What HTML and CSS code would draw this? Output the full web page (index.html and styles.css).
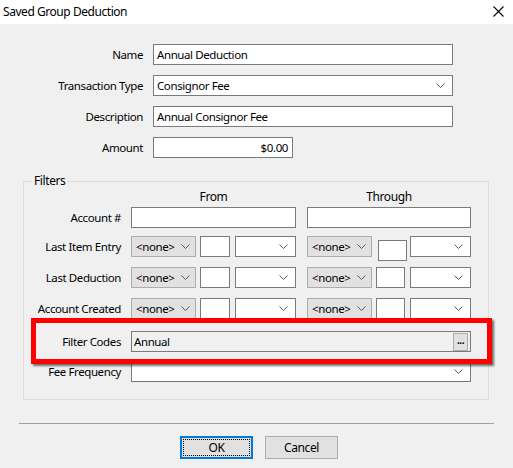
FILE: index.html
```html
<!DOCTYPE html>
<html lang="en">
<head>
<meta charset="utf-8">
<title>Saved Group Deduction</title>
<link rel="stylesheet" href="styles.css">
</head>
<body>
<div class="window">
  <header class="titlebar">
    <span class="title">Saved Group Deduction</span>
    <span class="close" aria-label="Close">
      <svg width="11" height="11" viewBox="0 0 11 11"><path d="M0.5 0.5 L10.5 10.5 M10.5 0.5 L0.5 10.5" stroke="#000" stroke-width="1.1" fill="none"/></svg>
    </span>
  </header>

  <main class="content">
    <div class="main-form">
      <label class="lbl">Name</label>
      <div class="field wide">Annual Deduction</div>

      <label class="lbl">Transaction Type</label>
      <div class="field wide combo">
        <span>Consignor Fee</span>
        <svg class="chev" width="9" height="5" viewBox="0 0 9 5"><polyline points="0.5,0.5 4.5,4.5 8.5,0.5"/></svg>
      </div>

      <label class="lbl">Description</label>
      <div class="field wide">Annual Consignor Fee</div>

      <label class="lbl">Amount</label>
      <div class="field amount">$0.00</div>
    </div>

    <fieldset class="filters">
      <legend>Filters</legend>

      <div class="frow heads">
        <span></span>
        <span class="head">From</span>
        <span class="head">Through</span>
      </div>

      <div class="frow">
        <label class="flbl">Account #</label>
        <div class="field"></div>
        <div class="field"></div>
      </div>

      <div class="frow r-entry">
        <label class="flbl">Last Item Entry</label>
        <div class="dates">
          <div class="pick"><span>&lt;none&gt;</span><svg class="chev" width="9" height="5" viewBox="0 0 9 5"><polyline points="0.5,0.5 4.5,4.5 8.5,0.5"/></svg></div>
          <div class="field num"></div>
          <div class="field combo unit"><svg class="chev" width="9" height="5" viewBox="0 0 9 5"><polyline points="0.5,0.5 4.5,4.5 8.5,0.5"/></svg></div>
        </div>
        <div class="dates">
          <div class="pick"><span>&lt;none&gt;</span><svg class="chev" width="9" height="5" viewBox="0 0 9 5"><polyline points="0.5,0.5 4.5,4.5 8.5,0.5"/></svg></div>
          <div class="field num nudged"></div>
          <div class="field combo unit"><svg class="chev" width="9" height="5" viewBox="0 0 9 5"><polyline points="0.5,0.5 4.5,4.5 8.5,0.5"/></svg></div>
        </div>
      </div>

      <div class="frow">
        <label class="flbl">Last Deduction</label>
        <div class="dates">
          <div class="pick"><span>&lt;none&gt;</span><svg class="chev" width="9" height="5" viewBox="0 0 9 5"><polyline points="0.5,0.5 4.5,4.5 8.5,0.5"/></svg></div>
          <div class="field num"></div>
          <div class="field combo unit"><svg class="chev" width="9" height="5" viewBox="0 0 9 5"><polyline points="0.5,0.5 4.5,4.5 8.5,0.5"/></svg></div>
        </div>
        <div class="dates">
          <div class="pick"><span>&lt;none&gt;</span><svg class="chev" width="9" height="5" viewBox="0 0 9 5"><polyline points="0.5,0.5 4.5,4.5 8.5,0.5"/></svg></div>
          <div class="field num"></div>
          <div class="field combo unit"><svg class="chev" width="9" height="5" viewBox="0 0 9 5"><polyline points="0.5,0.5 4.5,4.5 8.5,0.5"/></svg></div>
        </div>
      </div>

      <div class="frow">
        <label class="flbl">Account Created</label>
        <div class="dates">
          <div class="pick"><span>&lt;none&gt;</span><svg class="chev" width="9" height="5" viewBox="0 0 9 5"><polyline points="0.5,0.5 4.5,4.5 8.5,0.5"/></svg></div>
          <div class="field num"></div>
          <div class="field combo unit"><svg class="chev" width="9" height="5" viewBox="0 0 9 5"><polyline points="0.5,0.5 4.5,4.5 8.5,0.5"/></svg></div>
        </div>
        <div class="dates">
          <div class="pick"><span>&lt;none&gt;</span><svg class="chev" width="9" height="5" viewBox="0 0 9 5"><polyline points="0.5,0.5 4.5,4.5 8.5,0.5"/></svg></div>
          <div class="field num"></div>
          <div class="field combo unit"><svg class="chev" width="9" height="5" viewBox="0 0 9 5"><polyline points="0.5,0.5 4.5,4.5 8.5,0.5"/></svg></div>
        </div>
      </div>

      <div class="frow r-codes">
        <label class="flbl">Filter Codes</label>
        <div class="field span readonly">
          <span>Annual</span>
          <span class="ellipsis">...</span>
        </div>
      </div>

      <div class="frow r-freq">
        <label class="flbl">Fee Frequency</label>
        <div class="field span combo"><svg class="chev" width="9" height="5" viewBox="0 0 9 5"><polyline points="0.5,0.5 4.5,4.5 8.5,0.5"/></svg></div>
      </div>
    </fieldset>

    <hr class="sep">

    <div class="actions">
      <button class="btn default"><span class="focus">OK</span></button>
      <button class="btn">Cancel</button>
    </div>
  </main>

  <div class="highlight"></div>
</div>
</body>
</html>
```

FILE: styles.css
```css
* { box-sizing: border-box; }

html, body {
  margin: 0;
  padding: 0;
}

body {
  width: 513px;
  height: 468px;
  overflow: hidden;
  background: #f0f0f0;
  font-family: "Noto Sans", "Open Sans", sans-serif;
  font-size: 11.5px;
  letter-spacing: -0.4px;
  color: #000;
}

.window {
  position: relative;
  width: 513px;
  height: 468px;
}

/* title bar */
.titlebar {
  height: 24px;
  background: #fff;
  display: flex;
  align-items: center;
  justify-content: space-between;
  padding: 0 9px 2px 3px;
}

.title {
  font-size: 12px;
  letter-spacing: -0.45px;
}

.close {
  display: flex;
  margin-top: 1px;
}

/* body */
.content {
  padding-top: 20px;
}

.main-form {
  display: grid;
  grid-template-columns: 143px 300px;
  column-gap: 10px;
  row-gap: 10px;
  align-items: center;
}

.lbl, .flbl {
  text-align: right;
  white-space: nowrap;
}

.field {
  height: 21px;
  background: #fff;
  border: 1px solid #7a7a7a;
  display: flex;
  align-items: center;
  padding: 0 3px;
  white-space: nowrap;
}

.field.amount {
  width: 140px;
  justify-content: flex-end;
  padding-right: 4px;
}

.combo {
  justify-content: space-between;
}

.combo .chev {
  margin-left: auto;
  margin-right: 4px;
}

.chev polyline {
  fill: none;
  stroke: #5a5a5a;
  stroke-width: 1;
}

/* filters group */
.filters {
  margin: 15px 0 0 23px;
  width: 466px;
  border: 1px solid #dcdcdc;
  padding: 0 0 17px 0;
  min-width: 0;
}

.filters legend {
  margin-left: 8px;
  padding: 0 2px;
  font-size: 12px;
  line-height: 16px;
}

.frow {
  display: grid;
  grid-template-columns: 97px 165px 165px;
  column-gap: 10px;
  align-items: center;
  height: 21px;
}

.frow > :nth-child(3) {
  margin-left: 1px;
}

.frow + .frow {
  margin-top: 10px;
}

.frow.heads {
  height: 16px;
  margin-top: -1px;
}

.frow.heads + .frow {
  margin-top: 3px;
}

.frow.r-entry {
  margin-top: 8px;
}

.frow.r-codes {
  margin-top: 12px;
}

.frow.r-freq {
  margin-top: 9px;
}

.head {
  text-align: center;
  font-size: 12px;
}

.dates {
  display: flex;
  height: 21px;
}

.pick {
  width: 65px;
  height: 21px;
  background: #e1e1e1;
  border: 1px solid #adadad;
  display: flex;
  align-items: center;
  padding: 0 5px 0 4px;
}

.pick .chev {
  margin-left: auto;
}

.field.num {
  width: 30px;
  margin-left: 4px;
}

.field.num.nudged {
  margin: 4px -2px -4px 6px;
}

.field.unit {
  width: 61px;
  margin-left: 5px;
}

.field.span {
  grid-column: 2 / 4;
}

.field.readonly {
  background: #f0f0f0;
  justify-content: space-between;
  padding: 0 2px 0 2px;
}

.ellipsis {
  width: 15px;
  height: 18px;
  background: #e1e1e1;
  border: 1px solid #adadad;
  font-size: 10px;
  font-weight: bold;
  line-height: 12px;
  text-align: center;
  letter-spacing: -0.5px;
}

/* footer */
.sep {
  margin: 23px 19px 0 19px;
  border: 0;
  border-top: 1px solid #a0a0a0;
  height: 0;
}

.actions {
  display: flex;
  justify-content: center;
  gap: 12px;
  padding: 12px 0 0 5px;
}

.btn {
  width: 73px;
  height: 23px;
  background: #e1e1e1;
  border: 1px solid #adadad;
  font-family: inherit;
  font-size: 12px;
  letter-spacing: -0.4px;
  color: #000;
  padding: 0;
  display: flex;
  align-items: center;
  justify-content: center;
}

.btn.default {
  border: 2px solid #0078d7;
  padding: 1px;
}

.btn .focus {
  width: 100%;
  height: 100%;
  border: 1px dotted #000;
  display: flex;
  align-items: center;
  justify-content: center;
}

/* red callout around the filter codes row */
.highlight {
  position: absolute;
  left: 31px;
  top: 318px;
  width: 461px;
  height: 46px;
  border: 5px solid #ff0000;
  box-shadow: 2px 2px 2px rgba(0, 0, 0, 0.55);
  pointer-events: none;
}
```
